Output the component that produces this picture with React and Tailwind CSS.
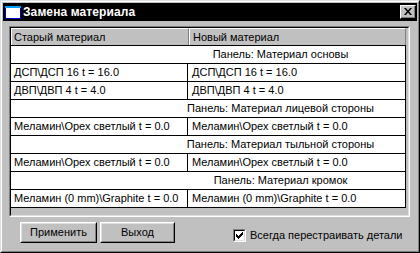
import React from "react";

const rows = [
  { t: "p", a: "Панель: Материал основы" },
  { t: "d", a: "ДСП\\ДСП 16 t = 16.0", b: "ДСП\\ДСП 16 t = 16.0" },
  { t: "d", a: "ДВП\\ДВП 4 t = 4.0", b: "ДВП\\ДВП 4 t = 4.0" },
  { t: "p", a: "Панель: Материал лицевой стороны" },
  { t: "d", a: "Меламин\\Орех светлый t = 0.0", b: "Меламин\\Орех светлый t = 0.0" },
  { t: "p", a: "Панель: Материал тыльной стороны" },
  { t: "d", a: "Меламин\\Орех светлый t = 0.0", b: "Меламин\\Орех светлый t = 0.0" },
  { t: "p", a: "Панель: Материал кромок" },
  { t: "d", a: "Меламин (0 mm)\\Graphite t = 0.0", b: "Меламин (0 mm)\\Graphite t = 0.0" },
];

function Button({ children, w }) {
  return (
    <div className={`${w} h-[21px] border border-t-white border-l-white border-r-black border-b-black`}>
      <div className="w-full h-full border border-t-[#dfdfdf] border-l-[#dfdfdf] border-r-[#808080] border-b-[#808080] flex items-center justify-center text-[11px] text-black">
        {children}
      </div>
    </div>
  );
}

export default function App() {
  return (
    <div
      className="w-[420px] h-[253px] bg-[#c0c0c0] border border-t-[#dfdfdf] border-l-[#dfdfdf] border-r-black border-b-black"
      style={{ fontFamily: '"Liberation Sans", Arial, sans-serif' }}
    >
      <div className="h-full border border-t-white border-l-white border-r-[#808080] border-b-[#808080] p-px flex flex-col">
        {/* Title bar */}
        <div className="h-[18px] bg-black flex items-center shrink-0">
          <svg width="16" height="13" viewBox="0 0 16 13" className="ml-[2px]">
            <rect x="0" y="0" width="16" height="13" fill="#0000c0" />
            <rect x="1" y="2" width="14" height="10" fill="#ffffff" />
            <rect x="0" y="0" width="16" height="2" fill="#00a0ff" />
          </svg>
          <span className="ml-[2px] text-white font-bold text-[12px] leading-none tracking-[0.1px]">Замена материала</span>
          <div className="ml-auto mr-[1px] w-[16px] h-[14px] bg-[#c0c0c0] border border-t-white border-l-white border-r-black border-b-black">
            <div className="w-full h-full border-r border-b border-r-[#808080] border-b-[#808080] flex items-center justify-center">
              <svg width="8" height="7" viewBox="0 0 8 7">
                <path d="M0 0h2l2 2.5L6 0h2L5 3.5 8 7H6L4 4.5 2 7H0l3-3.5z" fill="#000" />
              </svg>
            </div>
          </div>
        </div>

        {/* Grid control */}
        <div className="mt-[5px] ml-[6px] w-[401px] h-[191px] border border-t-[#808080] border-l-[#808080] border-r-white border-b-white">
          <div className="w-full h-full border border-t-black border-l-black border-r-[#dfdfdf] border-b-[#dfdfdf] bg-[#c0c0c0] flex flex-col">
            <div className="w-[395px] flex flex-col text-[11px] text-black leading-none">
              {/* header */}
              <div className="flex h-[18px] border-b border-b-black">
                <div className="w-[178px] h-full border-t border-l border-t-white border-l-white border-r border-r-[#808080] flex items-center pl-[2px]">
                  Старый материал
                </div>
                <div className="flex-1 h-full border-t border-l border-t-white border-l-white border-r border-r-[#808080] flex items-center pl-[3px]">
                  Новый материал
                </div>
              </div>
              {rows.map((r, i) =>
                r.t === "p" ? (
                  <div key={i} className="h-[18px] bg-white border-b border-b-black border-r border-r-black flex items-center justify-center pl-[145px]">
                    {r.a}
                  </div>
                ) : (
                  <div key={i} className="h-[18px] bg-white border-b border-b-black border-r border-r-black flex">
                    <div className="w-[177px] h-full border-r border-r-black flex items-center pl-[3px]">{r.a}</div>
                    <div className="flex-1 h-full flex items-center pl-[4px]">{r.b}</div>
                  </div>
                )
              )}
            </div>
          </div>
        </div>

        {/* Bottom */}
        <div className="flex items-start mt-[5px] ml-[17px]">
          <Button w="w-[77px]">Применить</Button>
          <div className="ml-[3px]">
            <Button w="w-[75px]">Выход</Button>
          </div>
          <div className="ml-[58px] mt-[7px] flex items-center">
            <div className="w-[13px] h-[13px] border border-t-[#808080] border-l-[#808080] border-r-white border-b-white">
              <div className="w-full h-full border border-t-black border-l-black border-r-[#dfdfdf] border-b-[#dfdfdf] bg-white flex items-center justify-center">
                <svg width="7" height="7" viewBox="0 0 7 7">
                  <path d="M0 2h1v1h1v1h1V3h1V2h1V1h1V0h1v3H6v1H5v1H4v1H3v1H2V6H1V5H0z" fill="#000" />
                </svg>
              </div>
            </div>
            <span className="ml-[4px] text-[11px] text-black leading-none">Всегда перестраивать детали</span>
          </div>
        </div>
      </div>
    </div>
  );
}
